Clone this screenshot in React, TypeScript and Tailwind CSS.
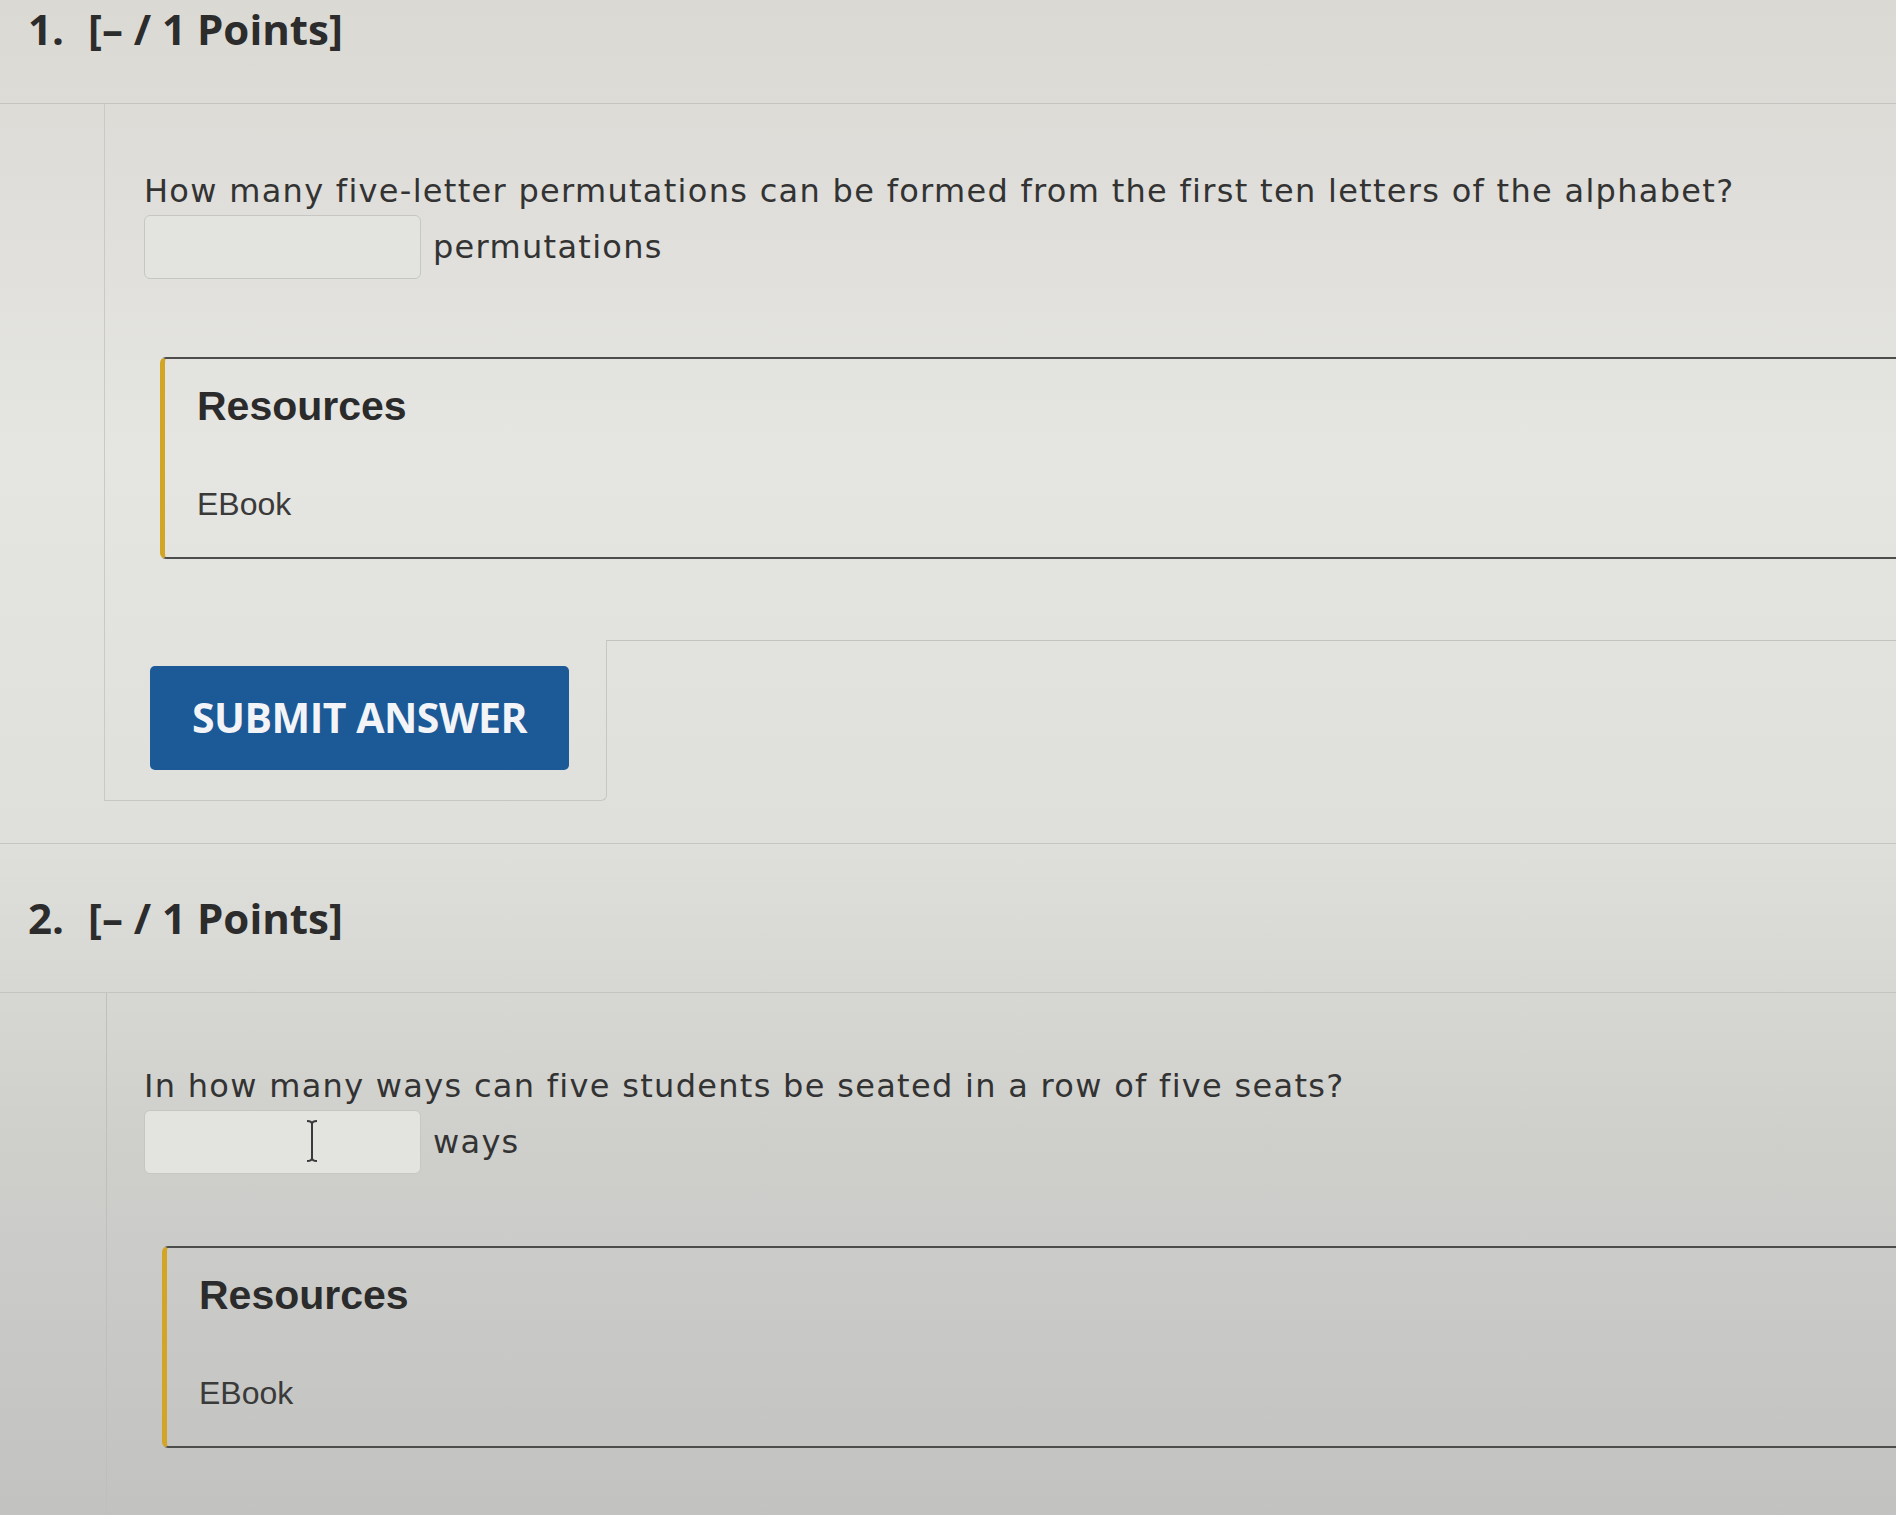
import React from "react"

function PointsHeader({ num, tall }: { num: number; tall?: boolean }) {
  return (
    <div
      className={
        "flex items-end border-b border-[#c4c4c0] pl-[28px] " +
        (tall ? "h-[149px] pb-[46px]" : "h-[104px] pb-[46px]")
      }
    >
      <div className="flex items-baseline gap-[24px] font-['Open_Sans',sans-serif] text-[42px] font-bold leading-[56px] text-[#2c2c2c]">
        <span>{num}.</span>
        <span>[– / 1 Points]</span>
      </div>
    </div>
  )
}

function Resources({ top }: { top: string }) {
  return (
    <div
      className={
        "ml-[55px] flex h-[202px] flex-col rounded-l-[6px] border-y-2 border-l-[5px] border-y-[#4d4d4b] border-l-[#d3a526] pl-[32px] pt-[24px] font-['Liberation_Sans',Arial,sans-serif] text-[#2b2b2b] " +
        top
      }
    >
      <div className="text-[41px] font-bold leading-[46px]">Resources</div>
      <div className="mt-[57px] text-[32px] leading-[37px] text-[#3a3a3a]">EBook</div>
    </div>
  )
}

function AnswerField({ unit, cursor }: { unit: string; cursor?: boolean }) {
  return (
    <div className="mt-[6px] flex items-center gap-[12px]">
      <div className="relative h-[64px] w-[277px] rounded-[6px] border border-[#c6c6c2] bg-[#e3e3e0]">
        {cursor && (
          <svg
            className="absolute left-[160px] top-[8px]"
            width="14"
            height="44"
            viewBox="0 0 14 44"
            fill="none"
            stroke="#3a3a3a"
            strokeWidth="2"
          >
            <path d="M2 2c3 0 5 1 5 3v34c0 2-2 3-5 3M12 2c-3 0-5 1-5 3M12 42c-3 0-5-1-5-3" />
          </svg>
        )}
      </div>
      <span className="font-['DejaVu_Sans',Verdana,sans-serif] text-[32px] tracking-[1.3px] text-[#333]">{unit}</span>
    </div>
  )
}

function QuestionText({ children }: { children: React.ReactNode }) {
  return (
    <p className="font-['DejaVu_Sans',Verdana,sans-serif] text-[32px] leading-[35px] tracking-[1.3px] text-[#333]">
      {children}
    </p>
  )
}

export default function App() {
  return (
    <div className="min-h-[1515px] w-full overflow-hidden bg-[linear-gradient(180deg,#dbd9d4_0%,#e5e5e2_30%,#dfdfdc_55%,#cfcfcc_75%,#c2c3c1_100%)]">
      {/* question 1 */}
      <section className="border-b border-[#c4c4c0] pb-[42px]">
        <PointsHeader num={1} />
        <div className="ml-[104px] flex flex-col border-l border-[#c9c9c5]">
          <div className="pl-[39px] pt-[70px]">
            <QuestionText>
              How many five-letter permutations can be formed from the first ten letters of the alphabet?
            </QuestionText>
            <AnswerField unit="permutations" />
          </div>
          <Resources top="mt-[78px]" />
          <div className="mt-[81px] flex">
            <div className="w-[502px] rounded-br-[6px] border-r border-b border-[#c6c6c2] pb-[30px] pl-[45px] pr-[37px] pt-[26px]">
              <button className="h-[104px] w-[419px] rounded-[5px] bg-[#1b5997] font-['Open_Sans',sans-serif] text-[41px] font-bold tracking-[-0.5px] text-[#f2f4f8]">
                SUBMIT ANSWER
              </button>
            </div>
            <div className="flex-1 border-t border-[#c2c2be]" />
          </div>
        </div>
      </section>

      {/* question 2 */}
      <section>
        <PointsHeader num={2} tall />
        <div className="ml-[106px] flex min-h-[521px] flex-col border-l border-[#bfbfbc]">
          <div className="pl-[37px] pt-[76px]">
            <QuestionText>In how many ways can five students be seated in a row of five seats?</QuestionText>
            <AnswerField unit="ways" cursor />
          </div>
          <Resources top="mt-[72px]" />
        </div>
      </section>
    </div>
  )
}
